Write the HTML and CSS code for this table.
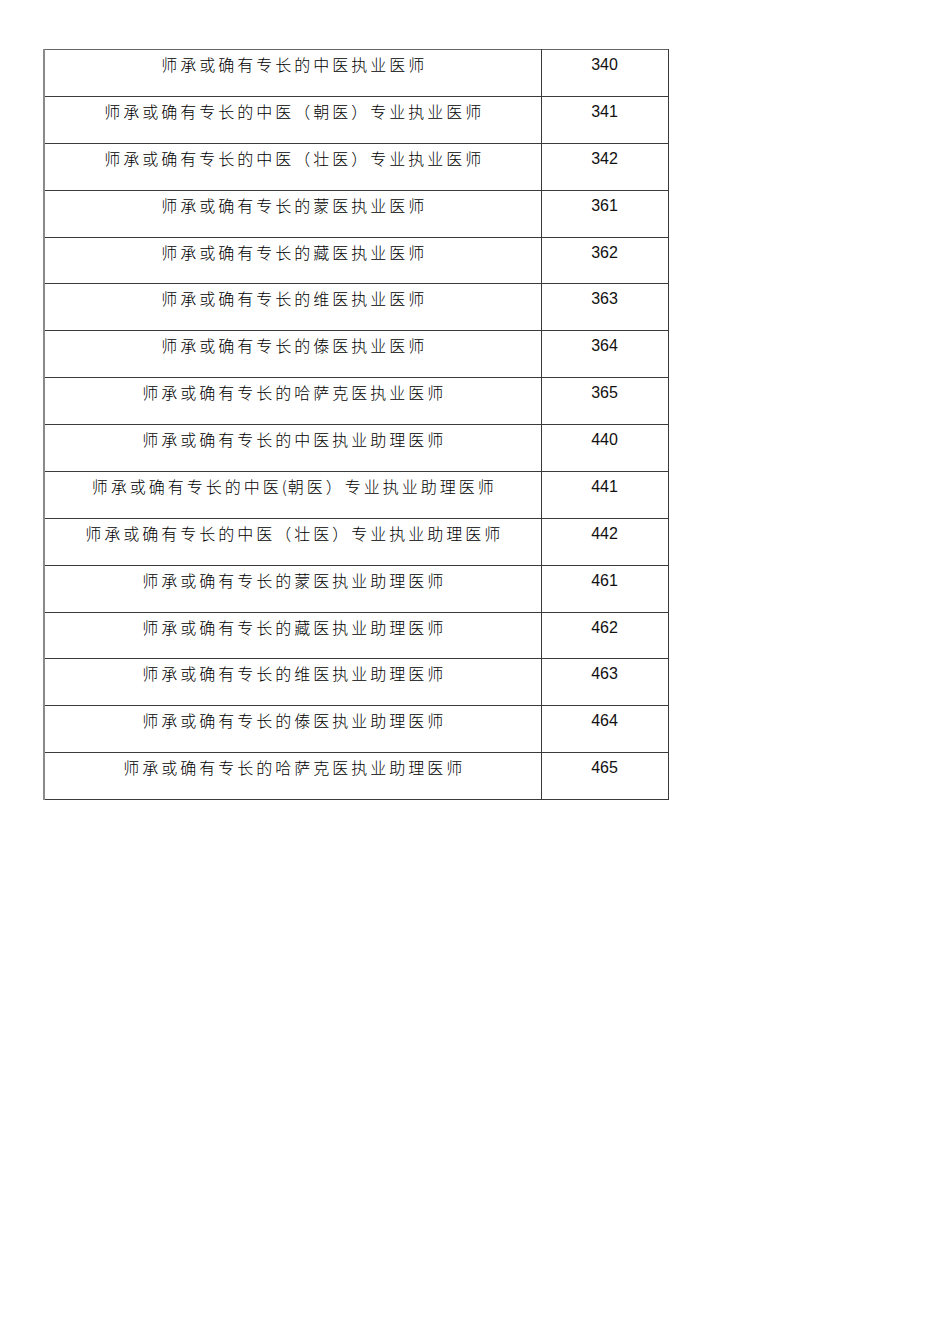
FILE: index.html
```html
<!DOCTYPE html>
<html lang="zh-CN">
<head>
<meta charset="utf-8">
<title>师承或确有专长</title>
<link rel="stylesheet" href="styles.css">
</head>
<body>
<table class="codes">
<colgroup><col class="c-name"><col class="c-code"></colgroup>
<tbody>
<tr><td class="name">师承或确有专长的中医执业医师</td><td class="code">340</td></tr>
<tr><td class="name">师承或确有专长的中医（朝医）专业执业医师</td><td class="code">341</td></tr>
<tr><td class="name">师承或确有专长的中医（壮医）专业执业医师</td><td class="code">342</td></tr>
<tr><td class="name">师承或确有专长的蒙医执业医师</td><td class="code">361</td></tr>
<tr><td class="name">师承或确有专长的藏医执业医师</td><td class="code">362</td></tr>
<tr><td class="name">师承或确有专长的维医执业医师</td><td class="code">363</td></tr>
<tr><td class="name">师承或确有专长的傣医执业医师</td><td class="code">364</td></tr>
<tr><td class="name">师承或确有专长的哈萨克医执业医师</td><td class="code">365</td></tr>
<tr><td class="name">师承或确有专长的中医执业助理医师</td><td class="code">440</td></tr>
<tr><td class="name">师承或确有专长的中医<span class="half">(</span>朝医）专业执业助理医师</td><td class="code">441</td></tr>
<tr><td class="name">师承或确有专长的中医（壮医）专业执业助理医师</td><td class="code">442</td></tr>
<tr><td class="name">师承或确有专长的蒙医执业助理医师</td><td class="code">461</td></tr>
<tr><td class="name">师承或确有专长的藏医执业助理医师</td><td class="code">462</td></tr>
<tr><td class="name">师承或确有专长的维医执业助理医师</td><td class="code">463</td></tr>
<tr><td class="name">师承或确有专长的傣医执业助理医师</td><td class="code">464</td></tr>
<tr><td class="name">师承或确有专长的哈萨克医执业助理医师</td><td class="code">465</td></tr>
</tbody>
</table>
</body>
</html>
```
FILE: styles.css
```css
html, body {
  margin: 0;
  padding: 0;
  background: #ffffff;
}
body {
  padding: 49px 0 0 43px;
}
.codes {
  border-collapse: collapse;
  table-layout: fixed;
  width: 624px;
  border-left: 2px solid #8a8a8a;
  border-top: 1px solid #555;
}
.c-name { width: 497px; }
.c-code { width: 127px; }
.codes td {
  border: 1px solid #3a3a3a;
  height: 46.875px;
  box-sizing: border-box;
  vertical-align: top;
  text-align: center;
  padding: 4px 0 0 0;
  color: #111;
}
.codes tr:first-child td { border-top-color: #666; }
.codes td.name {
  border-left: 2px solid #8a8a8a;
  font-family: "Noto Sans CJK SC", sans-serif;
  font-weight: 300;
  font-size: 16px;
  line-height: 20px;
  letter-spacing: 3px;
  text-indent: 3px;
  color: #000;
}
.codes td.name .half {
  letter-spacing: 1px;
}
.codes td.code {
  font-family: "Liberation Sans", Arial, sans-serif;
  font-size: 16px;
  line-height: 20px;
  padding-top: 5px;
}
```
